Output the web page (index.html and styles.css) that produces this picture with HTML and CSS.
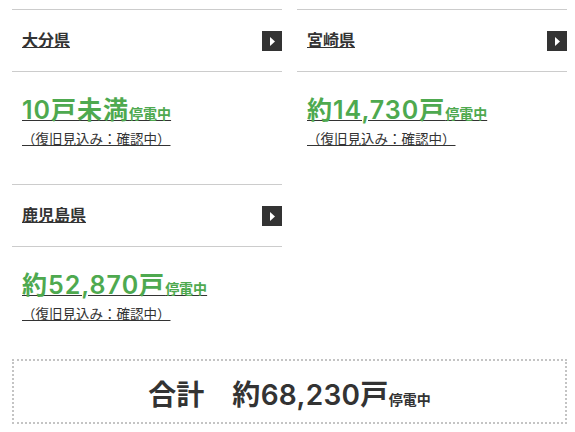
FILE: index.html
```html
<!DOCTYPE html>
<html lang="ja">
<head>
<meta charset="utf-8">
<link rel="stylesheet" href="styles.css">
</head>
<body>
<div class="page">
  <div class="grid">
    <section class="card">
      <div class="card-head">
        <a class="pref" href="#">大分県</a>
        <span class="arrow"><svg width="20" height="20" viewBox="0 0 20 20"><path d="M8 6 L13 10.5 L8 15 Z" fill="#fff"/></svg></span>
      </div>
      <div class="card-body">
        <a class="count" href="#"><span class="num">10戸未満</span><span class="unit">停電中</span></a>
        <a class="note" href="#">（復旧見込み：確認中）</a>
      </div>
    </section>
    <section class="card">
      <div class="card-head">
        <a class="pref" href="#">宮崎県</a>
        <span class="arrow"><svg width="20" height="20" viewBox="0 0 20 20"><path d="M8 6 L13 10.5 L8 15 Z" fill="#fff"/></svg></span>
      </div>
      <div class="card-body">
        <a class="count" href="#"><span class="num">約14,730戸</span><span class="unit">停電中</span></a>
        <a class="note" href="#">（復旧見込み：確認中）</a>
      </div>
    </section>
    <section class="card">
      <div class="card-head">
        <a class="pref" href="#">鹿児島県</a>
        <span class="arrow"><svg width="20" height="20" viewBox="0 0 20 20"><path d="M8 6 L13 10.5 L8 15 Z" fill="#fff"/></svg></span>
      </div>
      <div class="card-body">
        <a class="count" href="#"><span class="num">約52,870戸</span><span class="unit">停電中</span></a>
        <a class="note" href="#">（復旧見込み：確認中）</a>
      </div>
    </section>
  </div>
  <div class="total">
    <span class="total-label">合計</span><span class="total-num">約68,230戸</span><span class="total-unit">停電中</span>
  </div>
</div>
</body>
</html>
```
FILE: styles.css
```css
html, body {
  margin: 0;
  padding: 0;
  background: #fff;
}
body {
  font-family: "Noto Sans CJK JP", "Noto Sans", sans-serif;
  color: #333;
}
.page {
  padding: 9px 8px 0 12px;
}
.grid {
  display: grid;
  grid-template-columns: 270px 270px;
  column-gap: 15px;
}
.card-head {
  height: 61px;
  border-top: 1px solid #ccc;
  border-bottom: 1px solid #ccc;
  display: flex;
  align-items: center;
  justify-content: space-between;
  padding-left: 10px;
}
.pref {
  color: #333;
  font-size: 16px;
  font-weight: bold;
  text-decoration: underline;
  line-height: 20px;
  margin-bottom: 4px;
}
.arrow {
  width: 20px;
  height: 20px;
  background: #333;
  display: block;
}
.arrow svg { display: block; }
.card-body {
  height: 112px;
  padding-left: 10px;
  box-sizing: border-box;
  padding-top: 23px;
}
.count {
  display: inline-block;
  color: #4ea94f;
  text-decoration: underline;
  text-decoration-color: #333;
  line-height: 30px;
}
.num {
  font-family: "Inter", "Noto Sans CJK JP", sans-serif;
  font-size: 25px;
  font-weight: 600;
  letter-spacing: 1px;
}
.unit {
  font-size: 14px;
  font-weight: bold;
}
.note {
  display: block;
  width: fit-content;
  color: #333;
  font-size: 13.5px;
  line-height: 20px;
  text-decoration: underline;
  margin-top: 0;
}
.total {
  height: 65px;
  box-sizing: border-box;
  border: 2px dotted #c4c4c4;
  display: flex;
  align-items: baseline;
  justify-content: center;
  padding-top: 12px;
}
.total-label {
  font-size: 28px;
  font-weight: bold;
  margin-right: 28px;
}
.total-num {
  font-family: "Inter", "Noto Sans CJK JP", sans-serif;
  font-size: 28px;
  font-weight: 600;
  letter-spacing: 0.3px;
}
.total-unit {
  font-size: 14px;
  font-weight: bold;
}
```
